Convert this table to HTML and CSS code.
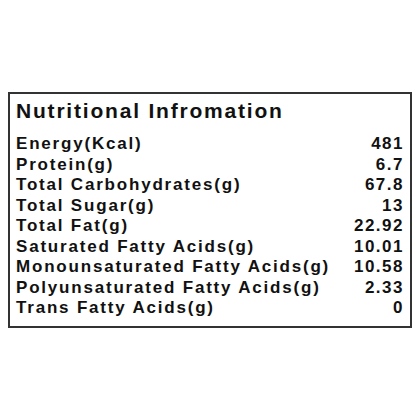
FILE: index.html
```html
<!DOCTYPE html>
<html lang="en">
<head>
    <meta charset="UTF-8">
    <title>Nutritional Information</title>
    <link rel="stylesheet" href="styles.css">
</head>
<body>
    <div class="nutrition-box">
        <h2>Nutritional Infromation</h2>
        <table class="nutrition-table">
            <tr><td>Energy(Kcal)</td><td class="value">481</td></tr>
            <tr><td>Protein(g)</td><td class="value">6.7</td></tr>
            <tr><td>Total Carbohydrates(g)</td><td class="value">67.8</td></tr>
            <tr><td>Total Sugar(g)</td><td class="value">13</td></tr>
            <tr><td>Total Fat(g)</td><td class="value">22.92</td></tr>
            <tr><td>Saturated Fatty Acids(g)</td><td class="value">10.01</td></tr>
            <tr><td>Monounsaturated Fatty Acids(g)</td><td class="value">10.58</td></tr>
            <tr><td>Polyunsaturated Fatty Acids(g)</td><td class="value">2.33</td></tr>
            <tr><td>Trans Fatty Acids(g)</td><td class="value">0</td></tr>
        </table>
    </div>
</body>
</html>
```
FILE: styles.css
```css
body {
    margin: 0;
    background-color: #fff;
    font-family: "Liberation Sans", Arial, sans-serif;
    color: #111;
}
.nutrition-box {
    margin: 92px 8px 0 8px;
    width: 404px;
    height: 236px;
    box-sizing: border-box;
    border: 2px solid #333;
    padding: 5px 6px 0 6px;
}
.nutrition-box h2 {
    margin: 0 0 11px 0;
    font-size: 21px;
    line-height: 24px;
    letter-spacing: 1.8px;
    font-weight: bold;
}
.nutrition-table {
    width: 100%;
    border-collapse: collapse;
    font-size: 17px;
    font-weight: bold;
    letter-spacing: 1.8px;
}
.nutrition-table td {
    padding: 0;
    height: 20.5px;
    line-height: 20.5px;
}
.nutrition-table .value {
    text-align: right;
    letter-spacing: 1.5px;
}
```
